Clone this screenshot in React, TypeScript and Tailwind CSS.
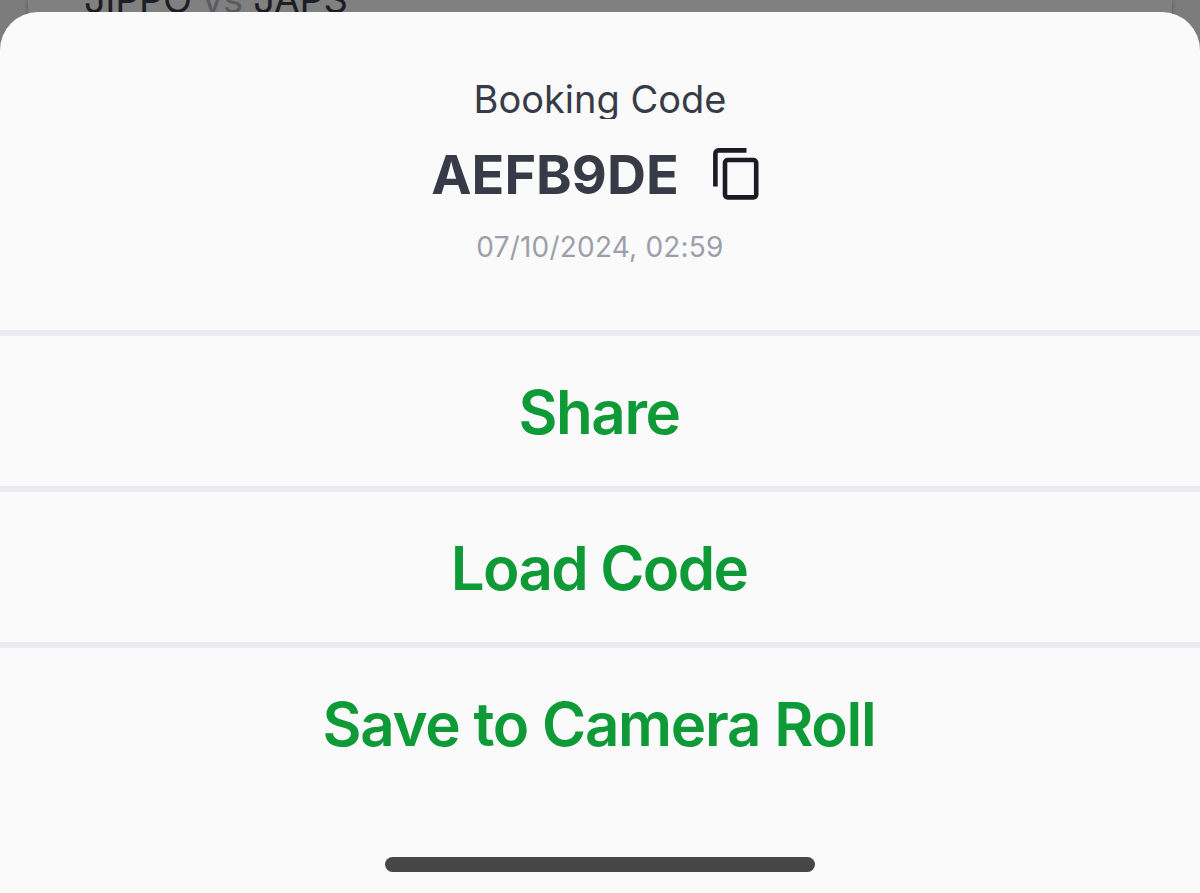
import React from "react";

function CopyIcon() {
  return (
    <svg width="46" height="53" viewBox="0 0 46 53" fill="none" stroke="#1b1b25" strokeWidth="4.6" aria-hidden="true">
      <path d="M2.4 38.5V5.4a3 3 0 0 1 3-3H33.5" />
      <rect x="12" y="12" width="31.2" height="37.4" rx="2.8" />
    </svg>
  );
}

function Action({ label, className }: { label: string; className: string }) {
  return (
    <button
      type="button"
      className="flex h-[156px] w-full items-center justify-center border-t-[6px] border-[#eaeaef] pt-0.5 pr-0.5 font-semibold text-[#0f9a38]"
    >
      <span className={`whitespace-nowrap text-[60px] leading-[72px] ${className}`}>{label}</span>
    </button>
  );
}

export default function App() {
  return (
    <div className="relative flex h-[893px] w-[1200px] flex-col overflow-hidden bg-[#7c7c7c] font-['Inter',sans-serif]">
      <div className="absolute inset-x-0 top-0 flex h-16 px-7">
        <div className="relative h-16 flex-1 bg-[#808080] shadow-[0_0_4px_rgba(0,0,0,0.35)]">
          <p className="absolute -top-6 left-[56px] text-[38px] leading-[46px] tracking-[-0.35px] whitespace-nowrap text-[#1c1e24]">
            JIPPO <span className="text-[#5b5c60]">vs</span> JAPS
          </p>
        </div>
      </div>
      <section className="relative mt-3 flex flex-1 flex-col rounded-t-[38px] bg-[#fafafa]">
        <header className="flex h-[318px] flex-col items-center pt-[67px]">
          <p className="h-10 overflow-hidden text-[38px] leading-[40px] whitespace-nowrap text-[#373b47]">
            Booking Code
          </p>
          <div className="mt-[21px] flex h-[68px] items-center gap-[34px] pr-[10px]">
            <span className="pt-0.5 text-[54px] leading-[66px] font-bold text-[#373b47]">AEFB9DE</span>
            <CopyIcon />
          </div>
          <p className="mt-[21px] text-[28px] leading-[36px] tracking-[0.2px] whitespace-nowrap text-[#9c9faa]">
            07/10/2024, 02:59
          </p>
        </header>
        <Action label="Share" className="tracking-[-1.4px]" />
        <Action label="Load Code" className="tracking-[-1.7px]" />
        <Action label="Save to Camera Roll" className="tracking-[-1.25px]" />
        <div className="mt-[59px] h-[15px] w-[430px] self-center rounded-full bg-[#464646]" />
      </section>
    </div>
  );
}
